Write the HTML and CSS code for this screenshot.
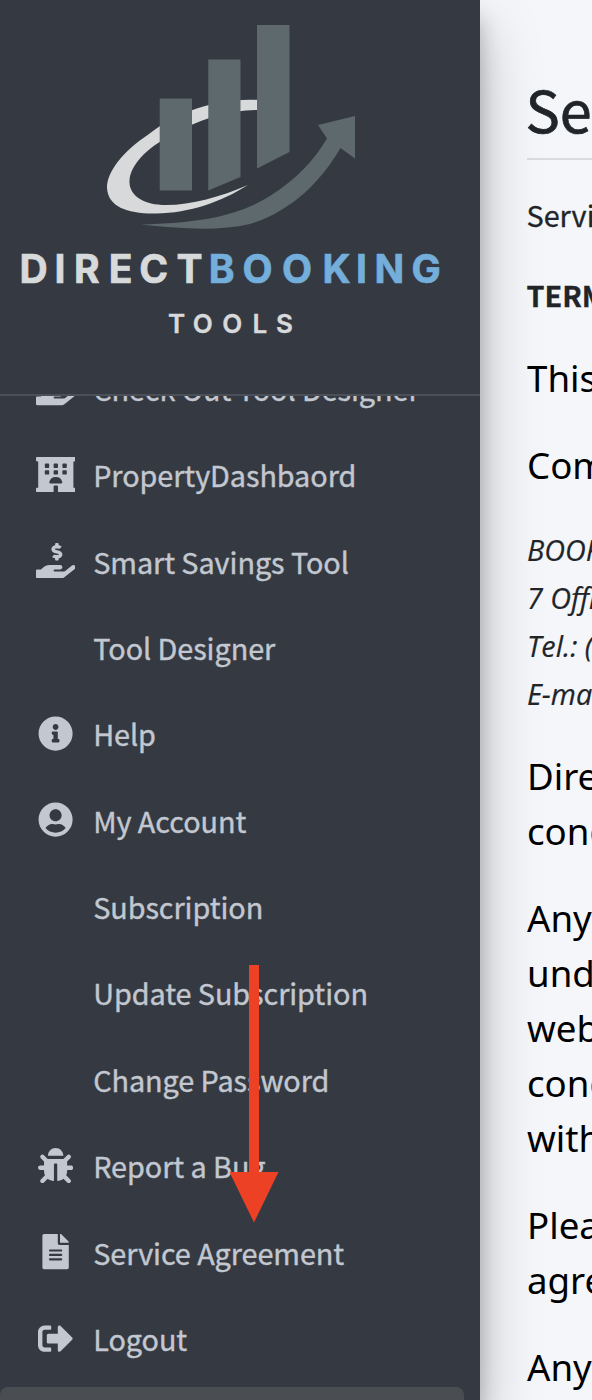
FILE: index.html
```
<!DOCTYPE html>
<html lang="en">
<head>
<meta charset="utf-8">
<title>Service Agreement</title>
<link rel="stylesheet" href="styles.css">
</head>
<body>
<div class="app">
  <aside class="sidebar">
    <header class="brand">
      <svg class="logo" viewBox="0 0 480 394">
        <path class="logo-light" d="M258 100C220 98 180 110 149 134C122 152 107 172 107 188C108 207 128 214 156 213.500C190 213 221 202 248 185C220 197 192 205 166 205C144 205 129 196 129.500 181C130 165 147 148 170 136C198 119 231 109.500 258 110Z"/>
        <path class="logo-slate" d="M159.700 98.500h32.300v92h-32.300zM208.300 59.500h32.200v117.500l-32.200 13.500zM257 25h32.500v127l-32.500 16.500z"/>
        <path class="logo-slate" d="M141 224.500C200 223 238 216 270 196C297 179 314 160 327 138.500L318 125L355 116V158.500L340.500 148C321 182 290 212 250 224C216 232 175 228 141 224.500Z"/>
        <text class="logo-name logo-light" y="282.500" x="19.500 54.500 74 108.700 139.300 176.500">DIRECT</text>
        <text class="logo-name logo-blue" y="282.500" x="208.700 242.500 282.100 322.500 356 374.500 411.500">BOOKING</text>
        <text class="logo-sub logo-light" y="333.300" x="168 192.700 222.300 252.600 276">TOOLS</text>
      </svg>
    </header>
    <nav class="nav">
      <ul class="menu">
        <li class="item"><span class="icon"><svg class="wide" viewBox="0 0 576 512"><use href="#hand"/></svg></span><span class="label">Check Out Tool Designer</span></li>
        <li class="item"><span class="icon"><svg class="wide" viewBox="0 0 576 512"><path fill-rule="evenodd" d="M560 64c8.840 0 16-7.160 16-16V16c0-8.840-7.160-16-16-16H16C7.160 0 0 7.160 0 16v32c0 8.840 7.160 16 16 16h16v384H16c-8.840 0-16 7.160-16 16v32c0 8.840 7.160 16 16 16h240v-80c0-8.800 7.200-16 16-16h32c8.800 0 16 7.200 16 16v80h240c8.840 0 16-7.160 16-16v-32c0-8.840-7.160-16-16-16h-16V64zM141 96h38q13 0 13 13v38q0 13-13 13h-38q-13 0-13-13v-38q0-13 13-13zM269 96h38q13 0 13 13v38q0 13-13 13h-38q-13 0-13-13v-38q0-13 13-13zM397 96h38q13 0 13 13v38q0 13-13 13h-38q-13 0-13-13v-38q0-13 13-13zM141 192h38q13 0 13 13v38q0 13-13 13h-38q-13 0-13-13v-38q0-13 13-13zM269 192h38q13 0 13 13v38q0 13-13 13h-38q-13 0-13-13v-38q0-13 13-13zM397 192h38q13 0 13 13v38q0 13-13 13h-38q-13 0-13-13v-38q0-13 13-13zM208 384c-8.800 0-17-7-15-16a97.500 97.500 0 0 1 190 0c2 9-6 16-15 16z"/></svg></span><span class="label">PropertyDashbaord</span></li>
        <li class="item"><span class="icon"><svg class="wide" viewBox="0 0 576 512"><path id="hand" d="M271.060 144.300l54.270 14.300a8.590 8.590 0 0 1 6.630 8.100c0 4.600-4.090 8.400-9.120 8.400h-35.600a30 30 0 0 1-11.190-2.200c-5.240-2.200-11.280-1.700-15.300 2l-19 17.500a11.680 11.680 0 0 0-2.250 2.660 11.420 11.420 0 0 0 3.880 15.740 83.770 83.770 0 0 0 34.510 11.500V240c0 8.800 7.830 16 17.370 16h17.370c9.550 0 17.380-7.200 17.380-16v-17.600c32.930-3.600 57.840-31 53.500-63-3.150-23-22.460-41.300-46.560-47.700L282.680 97.400a8.590 8.590 0 0 1-6.630-8.100c0-4.600 4.090-8.400 9.120-8.400h35.600A30 30 0 0 1 332 83.100c5.230 2.200 11.280 1.700 15.300-2l19-17.500A11.310 11.310 0 0 0 368.470 61a11.430 11.430 0 0 0-3.840-15.780 83.820 83.820 0 0 0-34.520-11.500V16c0-8.800-7.820-16-17.370-16H295.370C285.820 0 278 7.200 278 16v17.600c-32.890 3.600-57.850 31-53.510 63C227.630 119.600 247 137.900 271.060 144.300zM565.270 328.100c-11.800-10.700-30.200-10-42.600 0L430.270 402a63.640 63.640 0 0 1-40 14H272a16 16 0 0 1 0-32h78.290c15.900 0 30.710-10.900 33.250-26.600a31.200 31.200 0 0 0 .460-5.460A32 32 0 0 0 352 320H192a117.660 117.660 0 0 0-74.100 26.290L71.400 384H16A16 16 0 0 0 0 400v96a16 16 0 0 0 16 16H372.770a64 64 0 0 0 40-14L564 377a32 32 0 0 0 1.280-48.900z"/></svg></span><span class="label">Smart Savings Tool</span></li>
        <li class="item"><span class="icon"></span><span class="label">Tool Designer</span></li>
        <li class="item"><span class="icon"><svg viewBox="0 0 512 512"><path d="M256 8C119.043 8 8 119.083 8 256c0 136.997 111.043 248 248 248s248-111.003 248-248C504 119.083 392.957 8 256 8zm0 110c23.196 0 42 18.804 42 42s-18.804 42-42 42-42-18.804-42-42 18.804-42 42-42zm56 254c0 6.627-5.373 12-12 12h-88c-6.627 0-12-5.373-12-12v-24c0-6.627 5.373-12 12-12h12v-64h-12c-6.627 0-12-5.373-12-12v-24c0-6.627 5.373-12 12-12h64c6.627 0 12 5.373 12 12v100h12c6.627 0 12 5.373 12 12v24z"/></svg></span><span class="label">Help</span></li>
        <li class="item"><span class="icon"><svg viewBox="-8 0 512 512"><path d="M248 8C111 8 0 119 0 256s111 248 248 248 248-111 248-248S385 8 248 8zm0 96c48.600 0 88 39.400 88 88s-39.400 88-88 88-88-39.400-88-88 39.400-88 88-88zm0 344c-58.700 0-111.300-26.600-146.500-68.200 18.800-35.400 55.600-59.800 98.500-59.800 2.400 0 4.800.4 7.100 1.100 13 4.200 26.600 6.900 40.900 6.900 14.300 0 28-2.700 40.900-6.900 2.300-.7 4.700-1.100 7.100-1.100 42.900 0 79.700 24.400 98.500 59.800C359.300 421.400 306.700 448 248 448z"/></svg></span><span class="label">My Account</span></li>
        <li class="item"><span class="icon"></span><span class="label">Subscription</span></li>
        <li class="item"><span class="icon"></span><span class="label">Update Subscription</span></li>
        <li class="item"><span class="icon"></span><span class="label">Change Password</span></li>
        <li class="item"><span class="icon"><svg viewBox="0 0 512 512"><path d="M511.988 288.900c-.478 17.430-15.217 31.100-32.653 31.100H424v16c0 21.864-4.882 42.584-13.600 61.145l60.228 60.228c12.496 12.497 12.496 32.758 0 45.255-12.498 12.497-32.759 12.496-45.256 0l-54.736-54.736C345.886 467.965 314.351 480 280 480V236c0-6.627-5.373-12-12-12h-24c-6.627 0-12 5.373-12 12v244c-34.351 0-65.886-12.035-90.636-32.108l-54.736 54.736c-12.498 12.497-32.759 12.496-45.256 0-12.496-12.497-12.496-32.758 0-45.255l60.228-60.228C92.882 378.584 88 357.864 88 336v-16H32.666C15.230 320 .491 306.330.013 288.900-.484 270.816 14.028 256 32 256h56v-58.745l-46.628-46.628c-12.496-12.497-12.496-32.758 0-45.255 12.498-12.497 32.758-12.497 45.256 0L141.255 160h229.489l54.627-54.627c12.498-12.497 32.758-12.497 45.256 0 12.496 12.497 12.496 32.758 0 45.255L424 197.255V256h56c17.972 0 32.484 14.816 31.988 32.900zM257 0c-61.856 0-112 50.144-112 112h224C369 50.144 318.856 0 257 0z"/></svg></span><span class="label">Report a Bug</span></li>
        <li class="item"><span class="icon"><svg viewBox="-64 0 512 512"><path d="M224 136V0H24C10.700 0 0 10.700 0 24v464c0 13.300 10.700 24 24 24h336c13.300 0 24-10.700 24-24V160H248c-13.200 0-24-10.800-24-24zm64 236c0 6.600-5.400 12-12 12H108c-6.600 0-12-5.400-12-12v-8c0-6.600 5.400-12 12-12h168c6.600 0 12 5.400 12 12v8zm0-64c0 6.600-5.400 12-12 12H108c-6.600 0-12-5.400-12-12v-8c0-6.600 5.400-12 12-12h168c6.600 0 12 5.400 12 12v8zm0-72v8c0 6.600-5.400 12-12 12H108c-6.600 0-12-5.400-12-12v-8c0-6.600 5.400-12 12-12h168c6.600 0 12 5.400 12 12zm96-114.100v6.100H256V0h6.100c6.400 0 12.500 2.500 17 7l97.900 98c4.500 4.500 7 10.600 7 16.900z"/></svg></span><span class="label">Service Agreement</span></li>
        <li class="item"><span class="icon"><svg viewBox="0 0 512 512"><path d="M497 273L329 441c-15 15-41 4.500-41-17v-96H152c-13.300 0-24-10.700-24-24v-96c0-13.300 10.700-24 24-24h136V88c0-21.400 25.900-32 41-17l168 168c9.300 9.400 9.300 24.600 0 34zM192 436v-40c0-6.600-5.400-12-12-12H96c-17.700 0-32-14.300-32-32V160c0-17.700 14.300-32 32-32h84c6.600 0 12-5.400 12-12V76c0-6.600-5.400-12-12-12H96c-53 0-96 43-96 96v192c0 53 43 96 96 96h84c6.600 0 12-5.400 12-12z"/></svg></span><span class="label">Logout</span></li>
      </ul>
      <div class="active-item"></div>
    </nav>
    <svg class="pointer" viewBox="0 0 50 258"><path d="M20 0h10v207h19.500L25 257.500.5 207H20z"/></svg>
  </aside>
  <main class="content">
    <h1 class="title">Service</h1>
    <p class="small">Service</p>
    <p class="small strong">TERMS</p>
    <p class="body">This</p>
    <p class="body">Company</p>
    <address class="address">BOOKING<br>7 Office<br>Tel.: (<br>E-mail</address>
    <p class="body">Direct<br>conditions</p>
    <p class="body">Any<br>under<br>website<br>conditions<br>with</p>
    <p class="body">Please<br>agreement</p>
    <p class="body">Any</p>
  </main>
</div>
</body>
</html>
```
FILE: styles.css
```
* { box-sizing: border-box; }
html, body { margin: 0; height: 100%; overflow: hidden; }
body { background: #f4f6f9; color: #212529; font: 28.8px/48px "Noto Sans CJK SC", "Open Sans", sans-serif; }
.app { display: flex; width: 592px; height: 1400px; overflow: hidden; }

.sidebar {
  position: relative;
  z-index: 1;
  display: flex;
  flex-direction: column;
  flex: 0 0 480px;
  background: #353a42;
  box-shadow: 0 28px 56px rgba(0, 0, 0, .25), 0 20px 20px rgba(0, 0, 0, .22);
}
.brand { flex: 0 0 396px; border-bottom: 2px solid #4b5058; }
.logo { display: block; width: 480px; height: 394px; }
.logo-light { fill: #d8d9db; }
.logo-slate { fill: #5e696e; }
.logo-blue { fill: #74aedb; }
.logo-name { font: 700 39px Inter, sans-serif; stroke-width: .7px; }
.logo-name.logo-light { stroke: #d8d9db; }
.logo-name.logo-blue { stroke: #74aedb; }
.logo-sub { font: 600 26px Inter, sans-serif; stroke: #d8d9db; stroke-width: .4px; }

.nav { flex: 1; min-height: 0; overflow: hidden; }
.menu { list-style: none; margin: -51.2px 0 0; padding: 0 0 0 32.500px; }
.item { display: flex; align-items: center; height: 86.4px; color: #c2c7d0; }
.icon { display: flex; justify-content: center; flex: 0 0 46px; margin-right: 14.700px; }
.icon svg { width: 35.2px; height: 35.2px; fill: currentColor; }
.icon .wide { width: 39.6px; }
.label { padding-top: 1.500px; white-space: nowrap; letter-spacing: -.06px; -webkit-text-stroke: .4px currentColor; }
.active-item { width: 464px; height: 80px; margin-top: 5.500px; border-radius: 8px; background: #4a4d52; }

.pointer { position: absolute; left: 229px; top: 965px; width: 50px; height: 258px; fill: #ed4126; }

.content { flex: 1; min-width: 0; padding: 69.500px 0 0 47px; overflow: hidden; white-space: nowrap; }
.title { margin: 0 0 30.500px; height: 90.500px; border-bottom: 2px solid #dadbde; font-size: 57.6px; font-weight: 400; line-height: 76.800px; text-indent: -1.500px; -webkit-text-stroke: .7px currentColor; }
.small { margin: 0 0 32px; text-indent: -.5px; -webkit-text-stroke: .3px currentColor; }
.strong { font-weight: 700; }
.body { margin: 0 0 32px; color: #000; font: 36.670px/55px "Noto Sans", sans-serif; -webkit-text-stroke: 0; }
.address { margin: 0 0 32px; padding-top: 1px; height: 192px; font: italic 29.500px/48px "Open Sans", sans-serif; transform: scaleX(.975); transform-origin: left; -webkit-text-stroke: .2px currentColor; }
```
